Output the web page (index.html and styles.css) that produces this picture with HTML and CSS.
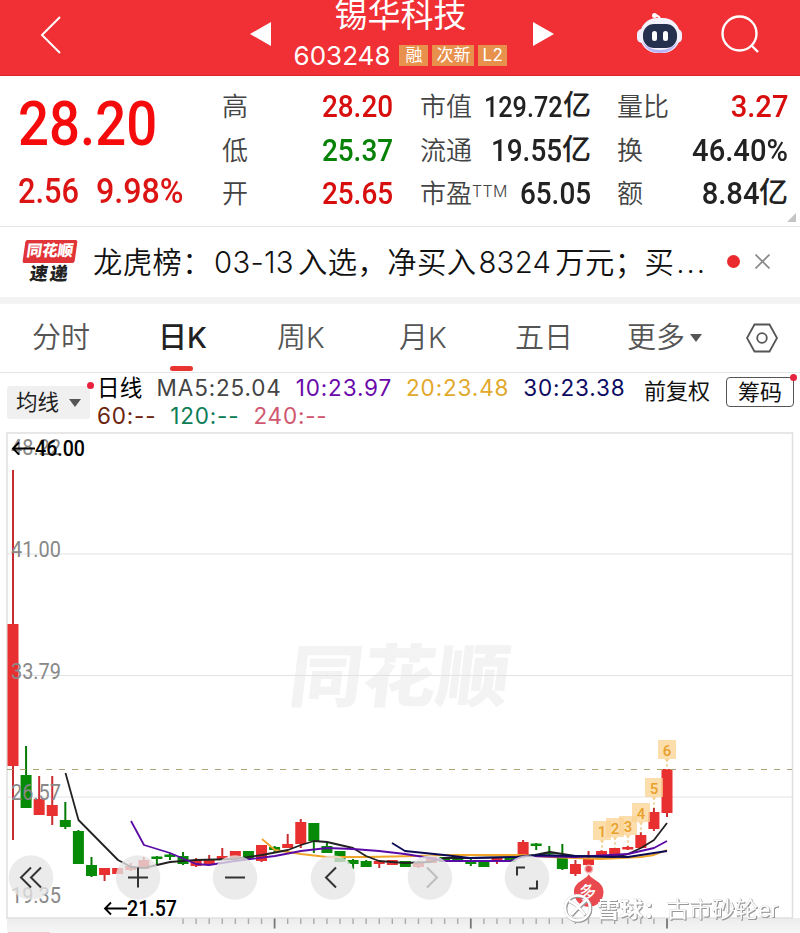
FILE: index.html
```html
<!DOCTYPE html>
<html lang="zh-CN">
<head>
    <meta charset="UTF-8">
    <title>锡华科技 603248</title>
    <link rel="stylesheet" href="styles.css">
</head>
<body>
    <header class="topbar">
        <svg class="back" width="22" height="38" viewBox="0 0 22 38"><path d="M20 1 L2 19 L20 37"/></svg>
        <svg class="prev" width="21" height="24" viewBox="0 0 21 24"><path d="M0 12 L21 0 V24 Z"/></svg>
        <div class="stock">
            <h1>锡华科技</h1>
            <div class="code"><span>603248</span><i>融</i><i>次新</i><i class="l2">L2</i></div>
        </div>
        <svg class="next" width="21" height="24" viewBox="0 0 21 24"><path d="M21 12 L0 0 V24 Z"/></svg>
        <svg class="robot" width="46" height="42" viewBox="0 0 46 42">
            <path d="M23 8 Q23 4 18 3" fill="none" stroke="#fff" stroke-width="2"/>
            <circle cx="17.500" cy="3.500" r="2.500" fill="#fff"/>
            <rect x="0" y="17" width="10" height="14" rx="5" fill="#eef"/>
            <rect x="35" y="17" width="10" height="14" rx="5" fill="#eef"/>
            <rect x="3" y="6" width="40" height="35" rx="17" fill="#f4f2ff"/>
            <path d="M5 29 Q10 41 23 41 T41 29 Q35 38 23 38 T5 29" fill="#b9b5f5"/>
            <rect x="6" y="12" width="34" height="24" rx="11" fill="#25304f"/>
            <rect x="15" y="19" width="5" height="10" rx="2.500" fill="#fff"/>
            <rect x="26" y="19" width="5" height="10" rx="2.500" fill="#fff"/>
        </svg>
        <svg class="search" width="40" height="40" viewBox="0 0 40 40"><circle cx="18.500" cy="18.500" r="17"/><path d="M30 30 L37 37"/></svg>
    </header>

    <section class="quote">
        <div class="price">
            <div class="last"><b>28.20</b></div>
            <div class="change"><b>2.56</b><b class="pct">9.98%</b></div>
        </div>
        <dl class="col-a">
            <dt>高</dt><dd class="up"><b>28.20</b></dd>
            <dt>低</dt><dd class="down"><b>25.37</b></dd>
            <dt>开</dt><dd class="up"><b>25.65</b></dd>
        </dl>
        <dl class="col-b">
            <dt>市值</dt><dd class="small"><b>129.72</b><em>亿</em></dd>
            <dt>流通</dt><dd><b>19.55</b><em>亿</em></dd>
            <dt>市盈<sup>TTM</sup></dt><dd><b>65.05</b></dd>
        </dl>
        <dl class="col-c">
            <dt>量比</dt><dd class="up"><b>3.27</b></dd>
            <dt>换</dt><dd><b>46.40%</b></dd>
            <dt>额</dt><dd><b>8.84</b><em>亿</em></dd>
        </dl>
        <span class="corner"></span>
    </section>

    <section class="news">
        <div class="news-logo"><strong>同花顺</strong><span>速递</span></div>
        <p>龙虎榜：<span>03-13</span>入选，净买入<span>8324</span>万元；买<span>...</span></p>
        <span class="dot"></span>
        <svg class="close" width="15" height="15" viewBox="0 0 15 15"><path d="M0.500 0.500 L14.500 14.500 M14.500 0.500 L0.500 14.500"/></svg>
    </section>

    <nav class="tabs">
        <a>分时</a>
        <a class="active">日K</a>
        <a>周K</a>
        <a>月K</a>
        <a>五日</a>
        <a class="more">更多</a>
        <svg width="32" height="30" viewBox="0 0 32 30"><path d="M8.500 1.500 H23.500 L31 15 L23.500 28.500 H8.500 L1 15 Z"/><circle cx="16" cy="15" r="4.800"/></svg>
    </nav>

    <section class="ma">
        <div class="ma-select">均线</div>
        <div class="ma-values">
            <div class="ma-line">
                <span class="period">日线</span>
                <span class="m5">MA5:25.04</span>
                <span class="m10">10:23.97</span>
                <span class="m20">20:23.48</span>
                <span class="m30">30:23.38</span>
            </div>
            <div class="ma-line second">
                <span class="m60">60:--</span>
                <span class="m120">120:--</span>
                <span class="m240">240:--</span>
            </div>
        </div>
        <span class="adjust">前复权</span>
        <button class="chips">筹码</button>
    </section>

    <svg class="chart" id="chart" width="800" height="501" viewBox="0 432 800 501"></svg>

    <script>
        // 每根K线的 x = 13 + i * STEP
        const STEP = 13.08;
        const RED = '#e83030';
        const GREEN = '#078a07';

        // [颜色, 实体上沿, 实体下沿, 最高, 最低]
        const candles = [
            ['r', 624, 766, 470, 840], ['g', 775, 808, 746, 808], ['r', 799, 815, 776, 815],
            ['r', 805, 816, 776, 825], ['g', 820, 827, 802, 829], ['g', 831, 864, 830, 864],
            ['g', 865, 876, 857, 877], ['r', 868, 875, 868, 881], ['r', 868, 874, 868, 874],
            ['r', 866, 870, 863, 871], ['r', 860, 869, 857, 869], ['g', 856.5, 859, 856, 865],
            ['g', 854.5, 857, 853, 860], ['g', 856, 864, 852, 865], ['r', 860, 866, 858, 867],
            ['r', 860, 865, 855, 865], ['r', 856, 860, 848, 860], ['r', 851, 859, 851, 859],
            ['g', 851, 859, 851, 859], ['r', 845, 861, 845, 862], ['g', 847, 850, 846, 852],
            ['r', 844, 848, 834, 848], ['r', 822, 844, 819, 848], ['g', 823, 841, 823, 853],
            ['g', 846, 853, 843, 853], ['g', 851, 862, 851, 862], ['g', 860, 864, 859, 869],
            ['g', 861, 867, 860, 867], ['r', 861, 864, 861, 868], ['r', 860, 865, 860, 865],
            ['g', 861, 867, 861, 867], ['r', 862, 867, 861, 868], ['r', 857, 863, 857, 863],
            ['g', 857, 862, 857, 862], ['g', 858, 862, 857, 862], ['g', 860, 864, 858, 866],
            ['g', 861, 867, 861, 867], ['r', 858, 862, 858, 864], ['g', 858, 862, 858, 862],
            ['r', 842, 856, 840, 856], ['g', 843.5, 846, 843, 850], ['g', 852, 854, 846, 855],
            ['g', 858, 869, 844, 870], ['r', 864, 874, 860, 876], ['r', 859, 865, 851, 865],
            ['r', 851, 855, 850, 855], ['r', 848, 857, 848, 857], ['r', 847, 849.5, 846, 850],
            ['r', 835, 848, 832, 848], ['r', 812, 829, 808, 831], ['r', 769, 813, 769, 817]
        ];

        const lines = [
            ['#f0a42a', '262,839 275,850 301,854 327,857 366,857 418,856 444,855 520,855 550,857 575,858 601,859 641,857 654,855 667,850'],
            ['#222', '65.5,773 78.5,820 118,860 131,867 144,868 157,865 170,862 196,860 235,859 262,855 288,850 301,845 314,841 327,842 340,845 353,848 366,856 379,861 405,863 430,862 444,858 470,858 517,857 535,855 550,852 575,856 614,857 628,854 641,848 654,840 667,823'],
            ['#5a0aa5', '131,821 144,845 170,853 196,864 209,865 235,861 275,856 301,851 327,848 353,849 379,851 405,854 430,858 445,861 510,861 525,856 575,857 628,854 654,848 667,841'],
            ['#0b0b55', '392,843 405,851 444,855 470,858 517,857 540,855 575,856 628,857 641,855 667,851']
        ];

        let svg = `
            <defs><linearGradient id="ruler" x2="0" y2="1"><stop offset="0" stop-color="#ececec"/><stop offset="1" stop-color="#f6f6f6"/></linearGradient></defs>
            <rect x="7" y="918" width="793" height="15" fill="url(#ruler)"/>
            <rect x="8" y="932" width="42" height="1" fill="#f6c4c8"/>
            <text class="brand" transform="translate(287 701) skewX(-7)" textLength="220" lengthAdjust="spacingAndGlyphs">同花顺</text>
            <path class="grid" d="M7 554 H792 M7 675.500 H792 M7 797 H792"/>
            <rect class="frame" x="7" y="433" width="785.500" height="485"/>`;

        candles.forEach(([c, top, bottom, high, low], i) => {
            const x = 13 + i * STEP;
            const color = c === 'r' ? RED : GREEN;
            svg += `<path d="M${x} ${high} V${low}" stroke="${c === 'r' ? '#c92c30' : '#067a06'}" stroke-width="2"/>
                <rect x="${x - 5.5}" y="${top}" width="11" height="${bottom - top}" fill="${color}"/>`;
        });

        svg += '<path class="current" d="M7 769.500 H792"/>';

        lines.forEach(([color, points]) => {
            svg += `<polyline class="avg" points="${points}" stroke="${color}"/>`;
        });

        // 价格坐标
        [['48.22', 455], ['41.00', 557], ['33.79', 679], ['26.57', 800], ['19.35', 903]].forEach(([t, y]) => {
            svg += `<text class="axis" x="11" y="${y}" textLength="50" lengthAdjust="spacingAndGlyphs">${t}</text>`;
        });
        svg += `
            <path class="arrow" d="M35 448.500 H13 M19 442.500 L13 448.500 L19 454.500"/>
            <text class="mark" x="35" y="456" textLength="50" lengthAdjust="spacingAndGlyphs">46.00</text>
            <path class="arrow" d="M127 908.500 H105 M111 902.500 L105 908.500 L111 914.500"/>
            <text class="mark" x="127" y="916" textLength="50" lengthAdjust="spacingAndGlyphs">21.57</text>`;

        // 连涨计数
        [[602, 821], [615, 818], [628, 816], [641, 803], [654, 778], [667, 740]].forEach(([x, y], i) => {
            svg += `<path class="stem" d="M${x} ${y + 19} v11"/>
                <path class="tag" d="M${x - 9} ${y} h18 v19 h-6 l-3 3 l-3 -3 h-6 z"/>
                <text class="tag-num" x="${x}" y="${y + 15.5}">${i + 1}</text>`;
        });

        // 底部刻度
        for (let i = 13; i <= 50; i++) {
            const major = (i - 20) % 15 === 0;
            svg += `<path d="M${13 + i * STEP} 918.500 v${major ? 10 : 5.5}" stroke="${major ? '#777' : '#aaa'}" stroke-width="${major ? 1.8 : 1.4}"/>`;
        }

        svg += `<circle cx="588.800" cy="869" r="3.800" fill="#e94a50" stroke="#f6b5b7" stroke-width="1.500"/>
            <path d="M588.800 874 C591 880 603.500 881 603.500 892 A14.700 14.700 0 0 1 574 892 C574 881 586.500 880 588.800 874 Z" fill="#e94a50"/>
            <text class="signal" transform="translate(589 898) rotate(-12)">多</text>`;

        const icons = [
            [31, '<path d="M0 -10 L-10 0 L0 10 M10 -10 L0 0 L10 10"/>'],
            [138, '<path d="M-10 0 H10 M0 -10 V10"/>'],
            [235, '<path d="M-10 0 H10"/>'],
            [333, '<path d="M3 -10 L-7 0 L3 10"/>'],
            [430, '<path d="M-3 -10 L7 0 L-3 10" opacity=".25"/>'],
            [527, '<path d="M-10 -2 V-10 H-2 M2 11 H10 V3"/>']
        ];
        icons.forEach(([x, icon]) => {
            svg += `<g class="tool" transform="translate(${x} 877.500)"><circle r="22.300"/>${icon}</g>`;
        });

        svg += `<g class="xueqiu">
                <circle cx="577.500" cy="908" r="12.500"/>
                <path d="M569 901 Q577 904 585 915 M586 900 Q579 906 571 915"/>
                <text x="597" y="917" textLength="181" lengthAdjust="spacingAndGlyphs"><tspan font-weight="700">雪球：</tspan>古市砂轮er</text>
            </g>`;

        document.getElementById('chart').innerHTML = svg;
    </script>
</body>
</html>
```

FILE: styles.css
```css
* { box-sizing: border-box; }
body { margin: 0; width: 800px; height: 933px; overflow: hidden; background: #fff; color: #222; font-family: Inter, "Noto Sans CJK SC", sans-serif; }
h1, p, dl, dd { margin: 0; }
svg { display: block; flex: none; }
b { display: inline-block; font-family: Roboto, sans-serif; font-weight: 500; }
i, em { font-style: normal; }

.topbar { display: flex; height: 76px; background: #f03035; border-bottom: 1px solid #d9292e; color: #fff; }
.topbar svg { fill: #fff; }
.topbar .back { margin: 16px 0 0 40px; fill: none; stroke: #fff; stroke-width: 2; }
.topbar .prev { margin: 22px 0 0 188px; }
.stock { width: 262px; padding-right: 3px; text-align: center; }
.stock h1 { height: 40px; margin-top: -2px; font-size: 33px; line-height: 34px; font-weight: 400; }
.code { display: flex; justify-content: center; align-items: center; gap: 4px; height: 34px; font-size: 26px; }
.code span { margin-right: 5px; }
.code i { height: 21px; padding: 0 4px; background: #e8914c; font-size: 17px; line-height: 20px; }
.code i:first-of-type { padding: 0 6px; }
.code .l2 { padding: 0 4px; letter-spacing: 0.5px; }
.topbar .next { margin-top: 22px; }
.topbar .robot { margin: 12px 0 0 83px; }
.topbar .search { margin: 15px 0 0 38px; fill: none; stroke: #fff; stroke-width: 2.4; }

.quote { position: relative; display: flex; height: 151px; padding-top: 9px; border-bottom: 1px solid #e4e4e4; }
.price { width: 222px; margin-top: -2px; padding-left: 18px; color: #f50b0b; }
.last { height: 79px; font-size: 62px; line-height: 80px; }
.price b { transform: scaleX(0.88); transform-origin: left; }
.change { height: 56px; font-size: 35px; line-height: 56px; color: #dc1414; }
.change b { width: 78px; }
.change .pct { transform: scaleX(0.92); }
dl { display: grid; grid-template-columns: auto minmax(0, 1fr); grid-auto-rows: 43.5px; line-height: 43.5px; }
dt { font-size: 26px; font-weight: 350; color: #444; white-space: nowrap; }
dt sup { display: inline-block; font-size: 16px; line-height: 16px; vertical-align: 6px; letter-spacing: 0.3px; }
dd { display: flex; justify-content: flex-end; font-size: 31px; }
dd b { transform: scaleX(0.9); transform-origin: right; }
dd em { font-size: 29px; font-weight: 500; line-height: 41px; }
dd.small { font-size: 30px; }
dd.small b { transform: scaleX(0.84); }
dd.small em { font-size: 28px; }
.up { color: #d80e0e; }
.down { color: #078207; }
.col-a { width: 171px; }
.col-b { width: 171px; margin-left: 27px; }
.col-c { width: 171px; margin-left: 26px; }
.col-c b { transform: scaleX(0.94); }
.corner { position: absolute; right: 4px; bottom: 4px; border-left: 9px solid transparent; border-bottom: 9px solid #c4c4c4; }

.news { display: flex; align-items: center; height: 77px; border-bottom: 7px solid #f3f3f3; }
.news-logo { display: flex; flex-direction: column; align-items: center; width: 54px; margin-left: 23px; }
.news-logo strong { width: 52px; height: 23px; border-radius: 2px; background: #e03438; color: #fff; font-size: 15.5px; line-height: 22px; font-weight: 900; text-align: center; transform: skewX(-8deg); }
.news-logo span { height: 21px; font-size: 18px; line-height: 21px; font-weight: 900; letter-spacing: 2px; transform: skewX(-8deg); }
.news p { width: 632px; padding: 0 0 4px 16px; font-size: 29.3px; font-weight: 350; letter-spacing: 0.45px; white-space: nowrap; color: #111; }
.news p span { margin: 0 4px 0 2px; letter-spacing: 0.3px; }
.news p span:last-child { letter-spacing: 2px; }
.dot { width: 13px; height: 13px; margin: -2px 0 0 18px; border-radius: 50%; background: #ea2a2e; }
.close { margin: -2px 0 0 15px; fill: none; stroke: #888; stroke-width: 1.6; }

.tabs { display: flex; height: 69px; padding-left: 32px; border-bottom: 1px solid #e4e4e4; color: #555; font-size: 29px; line-height: 68px; font-weight: 350; }
.tabs a { position: relative; width: 122px; white-space: nowrap; }
.tabs a:nth-child(1) { width: 126px; }
.tabs a:nth-child(2) { width: 119px; }
.tabs a:nth-child(4) { width: 116px; }
.tabs a:nth-child(5) { width: 112px; }
.tabs .active { color: #222; font-weight: 500; }
.tabs .active::after { content: ""; position: absolute; left: 12px; bottom: 1px; width: 23px; height: 5px; border-radius: 3px; background: #e8352f; }
.tabs .more { width: 119px; }
.tabs .more::after { content: ""; display: inline-block; margin-left: 5px; vertical-align: 6px; border: 6px solid transparent; border-top: 8px solid #555; border-bottom: 0; }
.tabs svg { margin-top: 19px; fill: none; stroke: #555; stroke-width: 1.8; }

.ma { display: flex; height: 59px; }
.ma-select { position: relative; width: 83px; height: 33px; margin: 13px 0 0 7px; padding-left: 9px; border-radius: 3px; background: #f0f0f0; font-size: 21.5px; line-height: 33px; }
.ma-select::before { content: ""; position: absolute; left: 80px; top: -4px; width: 7px; height: 7px; border-radius: 50%; background: #e8223c; }
.ma-select::after { content: ""; display: inline-block; margin-left: 10px; vertical-align: 3px; border: 6px solid transparent; border-top: 8px solid #555; border-bottom: 0; }
.ma-values { width: 547px; padding-left: 7px; font-size: 22.5px; }
.ma-line { display: flex; height: 28px; line-height: 29px; gap: 14px; letter-spacing: 0.85px; white-space: nowrap; }
.ma-line.second { letter-spacing: 0.8px; }
.period { color: #000; letter-spacing: 0.3px; }
.m5 { color: #444; }
.m10 { color: #6a0aaa; }
.m20 { color: #e2a92c; }
.m30 { color: #0d0b61; }
.m60 { color: #6c230c; }
.m120 { color: #0c7d56; }
.m240 { color: #cf5870; }
.adjust { width: 89px; padding-left: 7px; font-size: 22px; line-height: 37px; color: #111; }
.chips { position: relative; width: 68px; height: 30px; margin: 4px 0 0; padding: 0; border: 1px solid #555; border-radius: 4px; background: #fff; color: #111; font-family: inherit; font-size: 22px; line-height: 26px; }
.chips::after { content: ""; position: absolute; right: -4px; top: -4px; width: 7px; height: 7px; border-radius: 50%; background: #e8223c; }

.chart text { font-family: Roboto, "Noto Sans CJK SC", sans-serif; }
.frame { fill: none; stroke: #dfdfdf; stroke-width: 1.5; }
.grid { stroke: #e2e2e2; }
.chart .brand { font-size: 68px; font-weight: 900; fill: #f3f3f3; }
.current { stroke: #aaa577; stroke-width: 1.2; stroke-dasharray: 6 7; }
.avg { fill: none; stroke-width: 1.8; stroke-linejoin: round; }
.axis { font-size: 22.5px; fill: #888; }
.mark { font-size: 22.5px; font-weight: 500; fill: #000; }
.arrow { fill: none; stroke: #000; stroke-width: 1.8; }
.stem { stroke: #e6b765; stroke-dasharray: 3 2; }
.tag { fill: #fbd391; fill-opacity: 0.75; }
.tag-num { font-size: 15px; font-weight: 500; fill: #e8a02c; text-anchor: middle; }
.chart .signal { font-size: 17px; font-weight: 500; fill: #fff; text-anchor: middle; }
.tool circle { fill: #e6e6e6; fill-opacity: 0.78; }
.tool path { fill: none; stroke: #333; stroke-width: 2; }
.xueqiu { filter: drop-shadow(1px 1px 0.5px #999) drop-shadow(0 0 0.5px #aaa); }
.xueqiu circle, .xueqiu path { fill: none; stroke: #fff; stroke-width: 2.5; }
.xueqiu text { font-size: 22px; fill: #fff; }
```
